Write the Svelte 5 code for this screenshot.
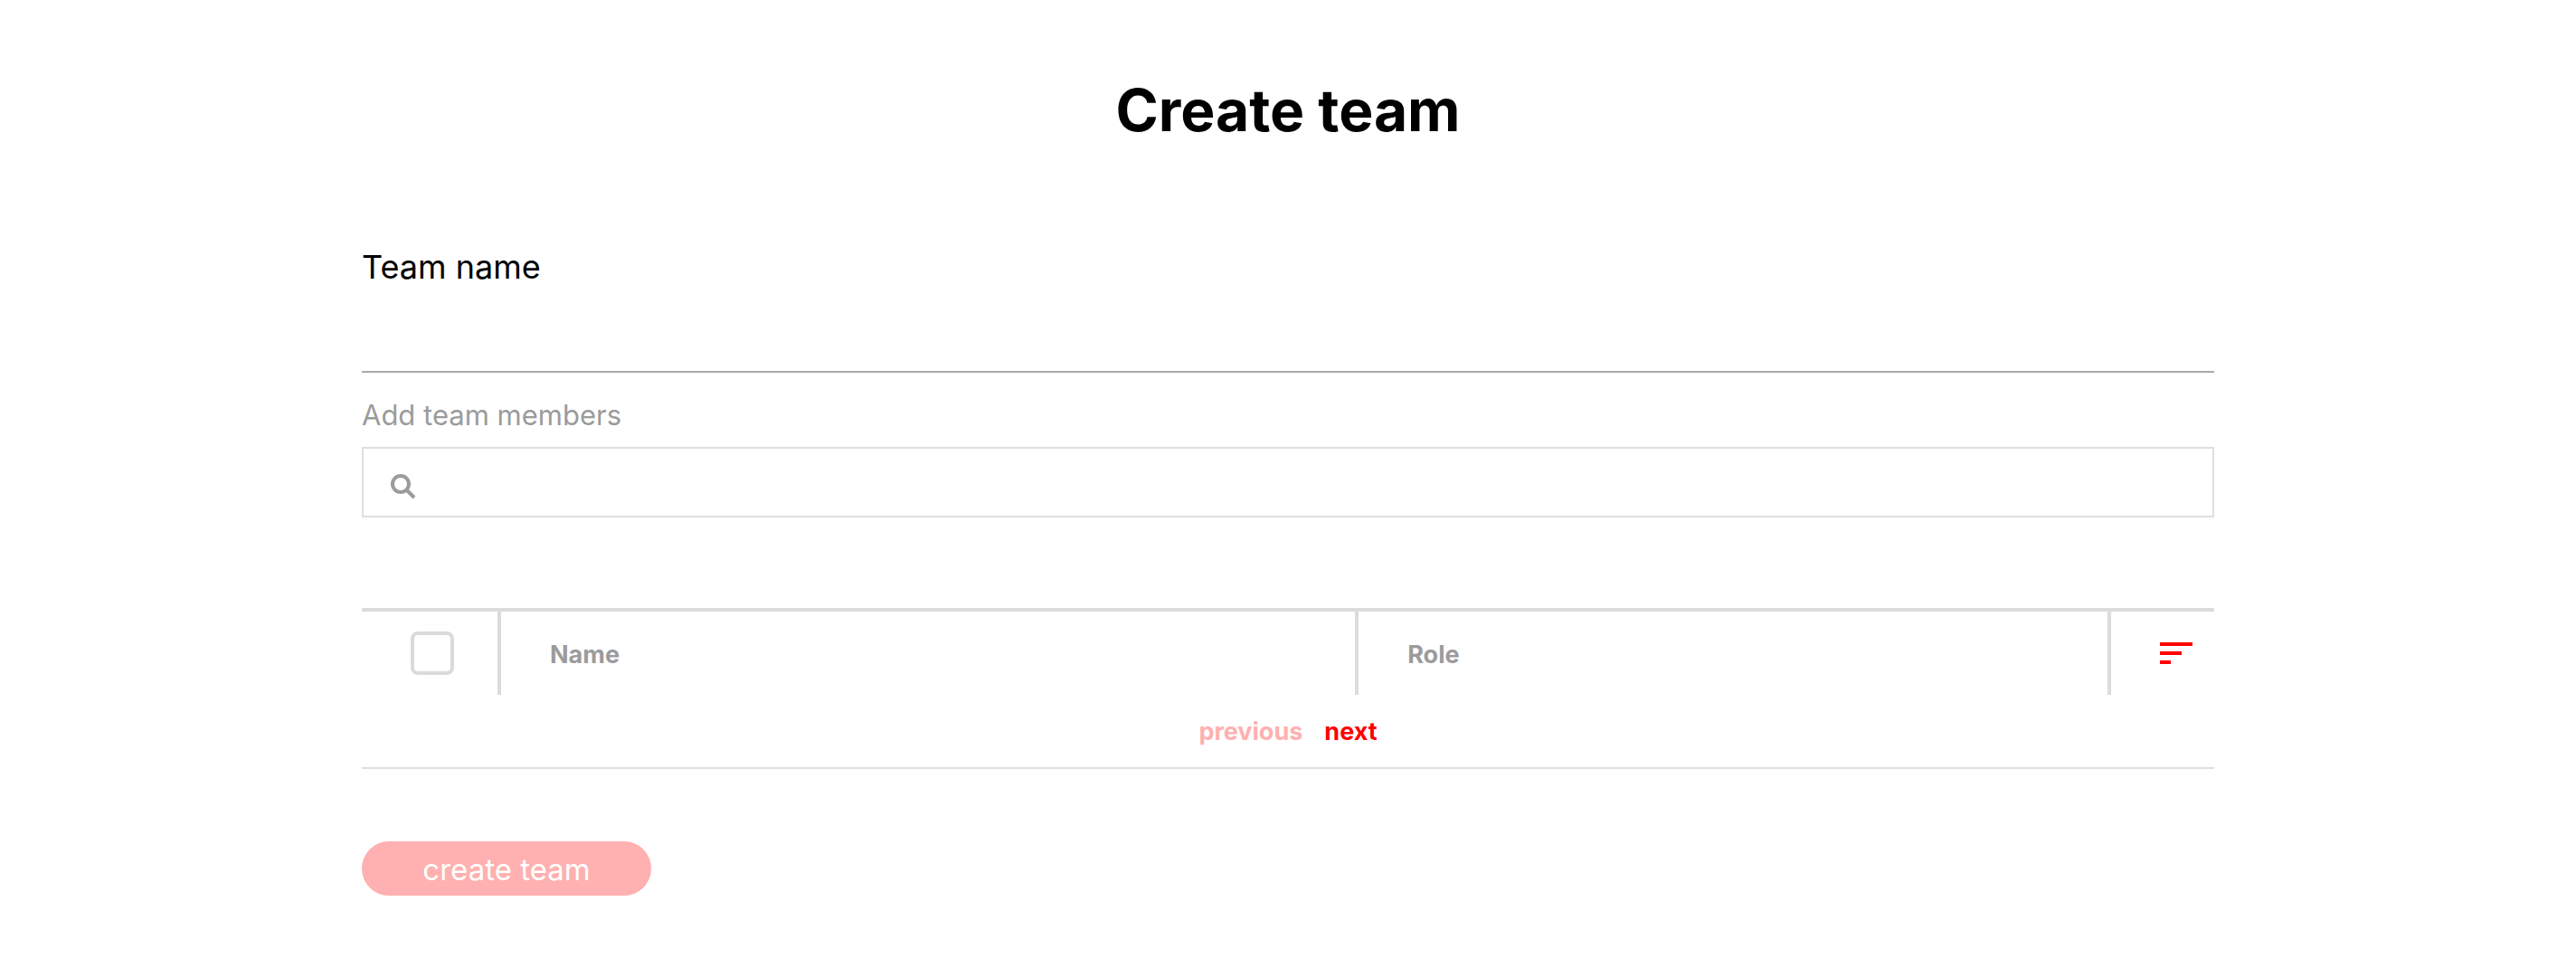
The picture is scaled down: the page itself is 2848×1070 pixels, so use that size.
<script>
  let teamName = $state('');
  let query = $state('');
  let selectAll = $state(false);
</script>

<main>
  <h1>Create team</h1>

  <form onsubmit={(event) => event.preventDefault()}>
    <label class="name-label" for="team-name">Team name</label>
    <input class="name-input" id="team-name" type="text" bind:value={teamName} />

    <label class="search-label" for="member-search">Add team members</label>
    <div class="search">
      <svg viewBox="0 0 28 28" aria-hidden="true">
        <circle cx="11" cy="11" r="9" />
        <path d="M17.5 17.5 L26 26" />
      </svg>
      <input id="member-search" type="text" bind:value={query} />
    </div>

    <table>
      <thead>
        <tr>
          <th class="check">
            <input type="checkbox" aria-label="Select all members" bind:checked={selectAll} />
          </th>
          <th class="name" scope="col">Name</th>
          <th class="role" scope="col">Role</th>
          <th class="sort">
            <button type="button" aria-label="Sort">
              <svg viewBox="0 0 36 24" aria-hidden="true">
                <path d="M0 0h36v4H0zM0 10h24v4H0zM0 20h12v4H0z" />
              </svg>
            </button>
          </th>
        </tr>
      </thead>
    </table>

    <nav aria-label="Pages">
      <button type="button" disabled>previous</button>
      <button type="button">next</button>
    </nav>

    <button class="submit" type="submit" disabled>create team</button>
  </form>
</main>

<style>
  :global(body) {
    margin: 0;
    background: #fff;
  }

  main {
    box-sizing: border-box;
    max-width: 2112px;
    margin: 0 auto;
    padding: 80px 32px;
    color: #000;
    font-family: Inter, "Noto Sans", sans-serif;
  }

  input,
  button {
    box-sizing: border-box;
    margin: 0;
    padding: 0;
    border: 0;
    background: none;
    font: inherit;
  }

  h1 {
    margin: 0 0 92px;
    font-size: 64px;
    line-height: 84px;
    font-weight: 700;
    text-align: center;
  }

  form {
    display: flex;
    flex-direction: column;
  }

  .name-label {
    font-size: 36px;
    line-height: 78px;
  }

  .name-input {
    height: 78px;
    border-bottom: 2px solid #a9a9a9;
    font-size: 31px;
  }

  .search-label {
    padding: 24px 0 12px;
    color: #9b9b9b;
    font-size: 31px;
    line-height: 46px;
  }

  .search {
    box-sizing: border-box;
    display: flex;
    align-items: center;
    gap: 16px;
    height: 78px;
    padding: 10px 30px 0;
    border: 2px solid #dfdfdf;
  }

  .search svg {
    width: 28px;
    height: 28px;
    fill: none;
    stroke: #9b9b9b;
    stroke-width: 4;
  }

  .search input {
    flex: 1;
    height: 60px;
    font-size: 27px;
  }

  table {
    width: 100%;
    margin-top: 100px;
    border-top: 4px solid #dcdcdc;
    border-spacing: 0;
    table-layout: fixed;
  }

  th {
    box-sizing: border-box;
    height: 92px;
    padding: 0 0 0 54px;
    color: #9b9b9b;
    font-size: 27px;
    line-height: 36px;
    font-weight: 700;
    text-align: left;
  }

  th + th {
    border-left: 4px solid #dcdcdc;
  }

  .check {
    width: 150px;
  }

  .name {
    width: 46.3%;
    padding-top: 4px;
  }

  .role {
    padding-top: 4px;
  }

  .sort {
    width: 118px;
  }

  .check input {
    display: block;
    width: 48px;
    height: 48px;
    border: 4px solid #dadada;
    border-radius: 8px;
    appearance: none;
  }

  .check input:checked {
    background: #f00;
  }

  .sort button,
  .sort svg {
    display: block;
    width: 36px;
    height: 24px;
  }

  .sort svg {
    fill: #f00;
  }

  nav {
    display: flex;
    justify-content: center;
    gap: 24px;
    padding: 22px 0 20px;
    border-bottom: 2px solid #dfdfdf;
  }

  nav button {
    color: #f00;
    font-size: 27px;
    line-height: 38px;
    font-weight: 700;
  }

  nav button:disabled {
    color: #ffb0b0;
  }

  .submit {
    align-self: flex-start;
    width: 320px;
    height: 60px;
    margin-top: 80px;
    padding-top: 2px;
    border-radius: 30px;
    background: #ffb0b0;
    color: #fff;
    font-size: 33px;
  }
</style>
